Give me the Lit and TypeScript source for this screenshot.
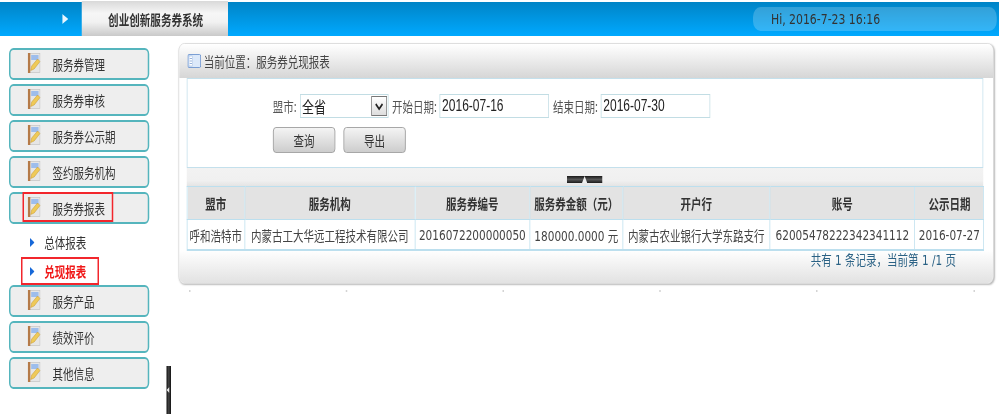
import { LitElement, html, css } from "lit";
import { customElement } from "lit/decorators.js";

const noteIcon = html`<svg class="note" viewBox="0 0 13 20" preserveAspectRatio="none">
  <rect x="0.5" y="0.5" width="12" height="19" fill="#e6e6e6" stroke="#bdbdbd" stroke-width=".6"/>
  <rect x="0" y="0" width="2.6" height="20" fill="#b57a48"/>
  <rect x="3.5" y="2" width="7.5" height="5" fill="#9dbdec"/>
  <path d="M3 17.5 L4 13 L10 6 L12.5 8.5 L6.5 16 Z" fill="#efca58" stroke="#c8962c" stroke-width=".5"/>
</svg>`;

const menusTop = ["服务券管理", "服务券审核", "服务券公示期", "签约服务机构"];
const menusBottom = ["服务产品", "绩效评价", "其他信息"];
const heads = ["盟市", "服务机构", "服务券编号", "服务券金额（元）", "开户行", "账号", "公示日期"];
const row = ["呼和浩特市", "内蒙古工大华远工程技术有限公司", "2016072200000050", "180000.0000 元", "内蒙古农业银行大学东路支行", "62005478222342341112", "2016-07-27"];
const colWidths = [77.3, 226.7, 153.3, 124, 196, 193.4, 92];

@customElement("app-root")
export class AppRoot extends LitElement {
  static styles = css`
    :host {
      display: block;
      width: 999px;
      height: 419px;
      overflow: hidden;
      background: #fff;
      font-family: "Liberation Sans", "Noto Sans CJK SC", sans-serif;
      color: #333;
    }
    /* The source picture is squeezed horizontally: everything is laid out 4/3 wide and narrowed. */
    .stage {
      width: 1332px;
      height: 419px;
      transform: scaleX(0.75);
      transform-origin: 0 0;
      filter: blur(0.35px);
    }
    .top {
      margin-top: 2px;
      height: 34px;
      display: flex;
      background: linear-gradient(#0084c6, #00a9ff);
    }
    .arrow-cell {
      width: 109px;
      display: flex;
      align-items: center;
      justify-content: flex-end;
      padding-right: 18px;
      box-sizing: border-box;
    }
    .arrow-cell svg { width: 8px; height: 10px; display: block; }
    .title {
      width: 195px;
      box-sizing: border-box;
      padding-left: 2px;
      margin-top: -1px;
      background: linear-gradient(#d9d9d9, #f6f6f6 35%, #f2f2f2 60%, #c9c9c9);
      display: flex;
      align-items: center;
      justify-content: center;
      font-size: 14.1px;
      font-weight: 700;
      color: #333;
      font-family: "Noto Sans CJK SC", sans-serif;
    }
    .spacer { flex: 1; }
    .hi {
      width: 325px;
      height: 24px;
      margin: 5px 3px 0 0;
      border-radius: 10px;
      background: rgba(255, 255, 255, 0.2);
      box-sizing: border-box;
      padding-left: 24px;
      display: flex;
      align-items: center;
      font: 14.5px "DejaVu Sans", sans-serif;
      color: #333;
    }
    .body { display: flex; align-items: flex-start; }
    .side { width: 187px; margin: 12px 0 0 12px; flex: none; }
    .btn {
      position: relative;
      height: 32px;
      box-sizing: border-box;
      margin-bottom: 4px;
      border: 2px solid #55b5bd;
      border-radius: 6px;
      background: #eeeeee;
      display: flex;
      align-items: center;
      padding-left: 23px;
      gap: 16px;
      font: 14px "Noto Sans CJK SC", sans-serif;
      color: #333;
    }
    .note { width: 17px; height: 20px; flex: none; margin-top: -2px; }
    .btn span { line-height: 20px; }
    .mark {
      position: absolute;
      left: 16px;
      top: -2px;
      width: 121px;
      height: 30px;
      box-sizing: border-box;
      border: 2px solid #f2262c;
    }
    .subs { margin: 1px 0 0 16px; }
    .sub {
      width: 104px;
      height: 28px;
      box-sizing: border-box;
      display: flex;
      align-items: center;
      padding-left: 12px;
      gap: 13px;
      font: 14px "Noto Sans CJK SC", sans-serif;
      color: #333;
    }
    .sub svg { width: 6px; height: 9px; flex: none; }
    .sub.on {
      margin-top: 1px;
      border: 2px solid #f2262c;
      padding-left: 10px;
      color: #f01818;
      font-weight: 700;
    }
    .gutter { width: 22.7px; flex: none; }
    .split {
      width: 6.7px;
      height: 48px;
      margin-top: 330px;
      flex: none;
      background: linear-gradient(90deg, #111, #444 50%, #111);
      display: flex;
      align-items: center;
    }
    .split svg { width: 4px; height: 6px; }
    .main { margin: 7px 0 0 9.3px; width: 1087px; flex: none; }
    .panel {
      height: 241px;
      box-sizing: border-box;
      border: 1px solid #dcdcdc;
      border-radius: 8px;
      box-shadow: 1px 1px 2px #bbb;
      display: flex;
      flex-direction: column;
      background: #fbfbfb;
      overflow: hidden;
    }
    .crumb {
      height: 34px;
      flex: none;
      background: linear-gradient(#fff, #d6d6d6);
      display: flex;
      align-items: center;
      padding-left: 11px;
      gap: 4px;
      font: 14px "Noto Sans CJK SC", sans-serif;
      color: #444;
    }
    .crumb svg { width: 18px; height: 14px; flex: none; }
    .inner {
      flex: 1;
      display: flex;
      flex-direction: column;
      background: linear-gradient(#fff 0, #fff 172px, #e2e2e2 100%);
    }
    .form {
      margin: 0 13px 0 10px;
      height: 90px;
      flex: none;
      box-sizing: border-box;
      border: 1px solid #c4e0ec;
      background: #fff;
      padding: 15px 0 0 114px;
    }
    .fields {
      display: flex;
      align-items: center;
      height: 24px;
      font: 14px "Noto Sans CJK SC", sans-serif;
      color: #555;
    }
    .lbl { white-space: nowrap; }
    .sel, .inp {
      box-sizing: border-box;
      height: 24px;
      border: 1px solid #c2dde4;
      background: #fff;
      font: 16px "Liberation Sans", "Noto Sans CJK SC", sans-serif;
      color: #222;
      padding: 0 2px;
      outline: none;
    }
    .sel {
      width: 118px;
      margin: 0 5px 0 4px;
      display: flex;
      align-items: center;
      justify-content: space-between;
      padding: 0 0 0 2px;
    }
    .caret {
      width: 21px;
      height: 20px;
      margin-right: 1px;
      box-sizing: border-box;
      border: 1px solid #777;
      background: linear-gradient(#fff, #ddd);
      display: flex;
      align-items: center;
      justify-content: center;
    }
    .caret svg { width: 13px; height: 9px; }
    .inp { width: 146px; margin: 0 5px 0 4px; }
    .actions { display: flex; gap: 11px; margin: 9px 0 0 0; }
    button {
      width: 83px;
      height: 26px;
      box-sizing: border-box;
      border: 1px solid #9a9a9a;
      border-radius: 4px;
      background: linear-gradient(#f4f4f4, #cdcdcd);
      font: 14px "Noto Sans CJK SC", sans-serif;
      color: #333;
      padding: 0;
    }
    .strip {
      margin: 0 13px 0 10px;
      height: 18px;
      flex: none;
      box-sizing: border-box;
      background: linear-gradient(#f2f2f2, #f0f0f0 70%, #e4e4e4);
      display: flex;
      justify-content: center;
      padding-top: 8px;
    }
    .handle {
      width: 47px;
      height: 7px;
      background: linear-gradient(#1a1a1a, #555 50%, #1a1a1a);
      display: flex;
      justify-content: center;
      align-items: flex-end;
    }
    .handle svg { width: 7px; height: 7px; display: block; }
    table {
      margin: 0 13px 0 10px;
      width: 1063px;
      flex: none;
      table-layout: fixed;
      border-collapse: collapse;
      border: 1px solid #bcdfee;
      border-bottom-width: 2px;
    }
    th, td {
      border: 1px solid #bcdfee;
      padding: 0;
      text-align: center;
      white-space: nowrap;
      overflow: hidden;
    }
    th {
      height: 32px;
      background: #e3e3e3;
      font: 700 14px "Noto Sans CJK SC", sans-serif;
      color: #333;
    }
    td {
      height: 29px;
      background: #fff;
      font: 14px "DejaVu Sans", "Noto Sans CJK SC", sans-serif;
      color: #444;
    }
    .pager {
      margin: 0 49px 0 0;
      text-align: right;
      font: 14px/18px "DejaVu Sans", "Noto Sans CJK SC", sans-serif;
      color: #2b6285;
    }
    .dots {
      display: flex;
      justify-content: space-between;
      margin: 6px 25px 0 14px;
    }
    .dots i { width: 2px; height: 2px; background: #d4d4d4; display: block; }
  `;

  render() {
    const tri = html`<svg viewBox="0 0 6 9"><path d="M0 0 L6 4.5 L0 9 Z" fill="#1668d8"/></svg>`;
    return html`
      <div class="stage">
        <div class="top">
          <div class="arrow-cell">
            <svg viewBox="0 0 8 10"><path d="M0 0 L8 5 L0 10 Z" fill="#e8f6ff"/></svg>
          </div>
          <div class="title">创业创新服务券系统</div>
          <div class="spacer"></div>
          <div class="hi">Hi, 2016-7-23 16:16</div>
        </div>
        <div class="body">
          <nav class="side">
            ${menusTop.map((m) => html`<div class="btn">${noteIcon}<span>${m}</span></div>`)}
            <div class="btn">${noteIcon}<span>服务券报表</span><div class="mark"></div></div>
            <div class="subs">
              <div class="sub">${tri}<span>总体报表</span></div>
              <div class="sub on">${tri}<span>兑现报表</span></div>
            </div>
            ${menusBottom.map((m) => html`<div class="btn">${noteIcon}<span>${m}</span></div>`)}
          </nav>
          <div class="gutter"></div>
          <div class="split">
            <svg viewBox="0 0 5 8"><path d="M5 0 L0 4 L5 8 Z" fill="#eee"/></svg>
          </div>
          <main class="main">
            <div class="panel">
              <div class="crumb">
                <svg viewBox="0 0 18 14">
                  <rect x=".5" y=".5" width="17" height="13" rx="1.5" fill="#dce9fa" stroke="#6b93cf"/>
                  <rect x="2" y="2" width="5" height="10" fill="#fff" stroke="#8fb0de" stroke-width=".6"/>
                  <path d="M3 4.5H6M3 7H6M3 9.5H6" stroke="#6b93cf" stroke-width=".8"/>
                </svg>
                <span>当前位置：服务券兑现报表</span>
              </div>
              <div class="inner">
                <div class="form">
                  <div class="fields">
                    <span class="lbl">盟市:</span>
                    <div class="sel">
                      <span>全省</span>
                      <span class="caret"><svg viewBox="0 0 13 9"><path d="M2 2 L6.5 7 L11 2" fill="none" stroke="#222" stroke-width="2"/></svg></span>
                    </div>
                    <span class="lbl">开始日期:</span>
                    <input class="inp" .value=${"2016-07-16"} />
                    <span class="lbl">结束日期:</span>
                    <input class="inp" .value=${"2016-07-30"} />
                  </div>
                  <div class="actions">
                    <button>查询</button>
                    <button>导出</button>
                  </div>
                </div>
                <div class="strip">
                  <div class="handle"><svg viewBox="0 0 7 7"><path d="M3.5 0 L7 7 H0 Z" fill="#eee"/></svg></div>
                </div>
                <table>
                  <colgroup>${colWidths.map((w) => html`<col style="width:${w}px" />`)}</colgroup>
                  <thead><tr>${heads.map((h) => html`<th>${h}</th>`)}</tr></thead>
                  <tbody><tr>${row.map((c) => html`<td>${c}</td>`)}</tr></tbody>
                </table>
                <div class="pager">共有 1 条记录，当前第 1 /1 页</div>
              </div>
            </div>
            <div class="dots">${[0, 1, 2, 3, 4, 5].map(() => html`<i></i>`)}</div>
          </main>
        </div>
      </div>
    `;
  }
}
